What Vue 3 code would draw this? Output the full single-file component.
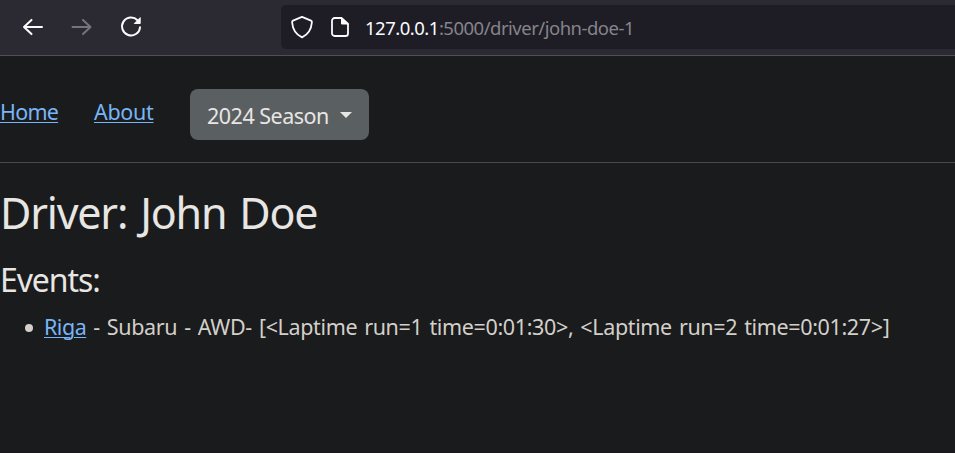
<script setup>
const laps = [
  { run: 1, time: '0:01:30' },
  { run: 2, time: '0:01:27' },
]
const lapText = '[' + laps.map((l) => `<Laptime run=${l.run} time=${l.time}>`).join(', ') + ']'
</script>

<template>
  <div class="window">
    <header class="toolbar">
      <div class="controls">
        <svg class="icon" viewBox="0 0 24 24"><path d="M21 12H3M10.500 4.900L3 12l7.500 7.100" /></svg>
        <svg class="icon dim" viewBox="0 0 24 24"><path d="M2.500 12H20.500M13 4.900l7.500 7.100-7.500 7.100" /></svg>
        <svg class="icon" viewBox="0 0 24 24">
          <path d="M18.500 5.200A9 9 0 1 0 21 12.300" />
          <path class="solid" d="M21.200 3v5.500H15.700z" />
        </svg>
      </div>
      <div class="address">
        <svg class="shield" viewBox="0 0 24 24"><path d="M12 1.800L21 5.600c.9.4 1 .8.9 1.700C21.400 14 18.500 19.400 12 22.400 5.500 19.400 2.600 14 2.100 7.300c-.1-.9 0-1.300.9-1.700z" /></svg>
        <svg class="page" viewBox="0 0 20 24">
          <path d="M11.500 3H4.600A2.600 2.600 0 0 0 2 5.600v12.800A2.600 2.600 0 0 0 4.600 21h10.800a2.600 2.600 0 0 0 2.600-2.600V9z" />
          <path class="solid" d="M11.500 3v6H18z" />
        </svg>
        <span class="url"><span class="host">127.0.0.1</span><span class="path">:5000/driver/john-doe-1</span></span>
      </div>
    </header>
    <nav class="nav">
      <a class="home" href="#">Home</a>
      <a class="about" href="#">About</a>
      <button class="season" type="button"><span>2024 Season</span><i class="caret"></i></button>
    </nav>
    <main class="content">
      <h1>Driver: John Doe</h1>
      <h2>Events:</h2>
      <ul>
        <li><a class="event" href="#">Riga</a><span class="detail"> - Subaru - AWD- {{ lapText }}</span></li>
      </ul>
    </main>
  </div>
</template>

<style>
body {
  margin: 0;
  background: #1a1b1d;
}
</style>

<style scoped>
.window {
  box-sizing: border-box;
  height: 453px;
  overflow: hidden;
  border-bottom: 1px solid #1c141d;
  background: #1a1b1d;
  color: #d3cfc9;
  font-family: "Noto Sans", "Open Sans", sans-serif;
  font-size: 21.5px;
}
.toolbar {
  box-sizing: border-box;
  height: 56px;
  display: flex;
  align-items: flex-start;
  padding-top: 5px;
  background: #2b2a33;
  border-bottom: 1px solid #505154;
}
.controls {
  box-sizing: border-box;
  width: 281px;
  height: 44px;
  display: flex;
  align-items: center;
  gap: 25px;
  padding-left: 21px;
}
svg {
  fill: none;
  stroke: #fbfbfe;
  stroke-width: 2;
  stroke-linecap: round;
  stroke-linejoin: round;
}
.icon {
  width: 24px;
  height: 24px;
}
.dim {
  stroke: #75747b;
}
.solid {
  fill: #fbfbfe;
  stroke-width: 1;
}
.address {
  flex: 1;
  height: 44px;
  display: flex;
  align-items: center;
  background: #1e1d25;
  border-radius: 5px 0 0 5px;
}
.shield {
  width: 24px;
  height: 24px;
  margin-left: 9px;
  stroke-width: 1.8;
}
.page {
  width: 20px;
  height: 24px;
  margin-left: 16px;
  stroke-width: 1.8;
}
.url {
  margin-left: 15px;
  padding-top: 1px;
  font-size: 18.5px;
  letter-spacing: -0.5px;
  white-space: nowrap;
}
.host {
  color: #fbfbfe;
}
.path {
  color: #85848a;
}
.nav {
  box-sizing: border-box;
  height: 107px;
  display: flex;
  align-items: flex-start;
  padding-top: 33px;
  border-bottom: 1px solid #48494b;
}
a {
  color: #78b5f6;
  text-decoration: underline;
  text-decoration-thickness: 1px;
  text-underline-offset: 2px;
}
.home,
.about {
  box-sizing: border-box;
  line-height: 46px;
}
.home {
  width: 94px;
  letter-spacing: -0.75px;
}
.about {
  width: 96px;
  letter-spacing: -0.3px;
}
.season {
  box-sizing: border-box;
  width: 179px;
  height: 51px;
  display: flex;
  align-items: center;
  justify-content: space-between;
  padding: 2px 17px 0;
  border: 0;
  border-radius: 8px;
  background: #5a5f62;
  color: #e8e6e3;
  font: inherit;
  letter-spacing: -0.5px;
  white-space: nowrap;
}
.caret {
  margin-bottom: 2px;
  border-top: 6px solid #e8e6e3;
  border-left: 6px solid transparent;
  border-right: 6px solid transparent;
}
h1,
h2 {
  margin: 0;
  color: #e8e6e3;
  font-weight: 400;
  white-space: nowrap;
}
h1 {
  padding-top: 24px;
  font-size: 43px;
  line-height: 52px;
  letter-spacing: -1.2px;
  word-spacing: 3px;
}
h2 {
  padding-top: 22px;
  font-size: 32px;
  line-height: 38px;
  letter-spacing: -1.1px;
}
ul {
  margin: 0;
  padding: 12px 0 0 25px;
  list-style: none;
}
li {
  display: flex;
  align-items: center;
  line-height: 32px;
  white-space: pre;
}
li::before {
  content: "";
  width: 8px;
  height: 8px;
  margin: 2px 11px 0 0;
  border-radius: 50%;
  background: #d3cfc9;
}
.event {
  letter-spacing: -0.5px;
}
.detail {
  letter-spacing: -0.36px;
  word-spacing: 1.8px;
}
</style>
